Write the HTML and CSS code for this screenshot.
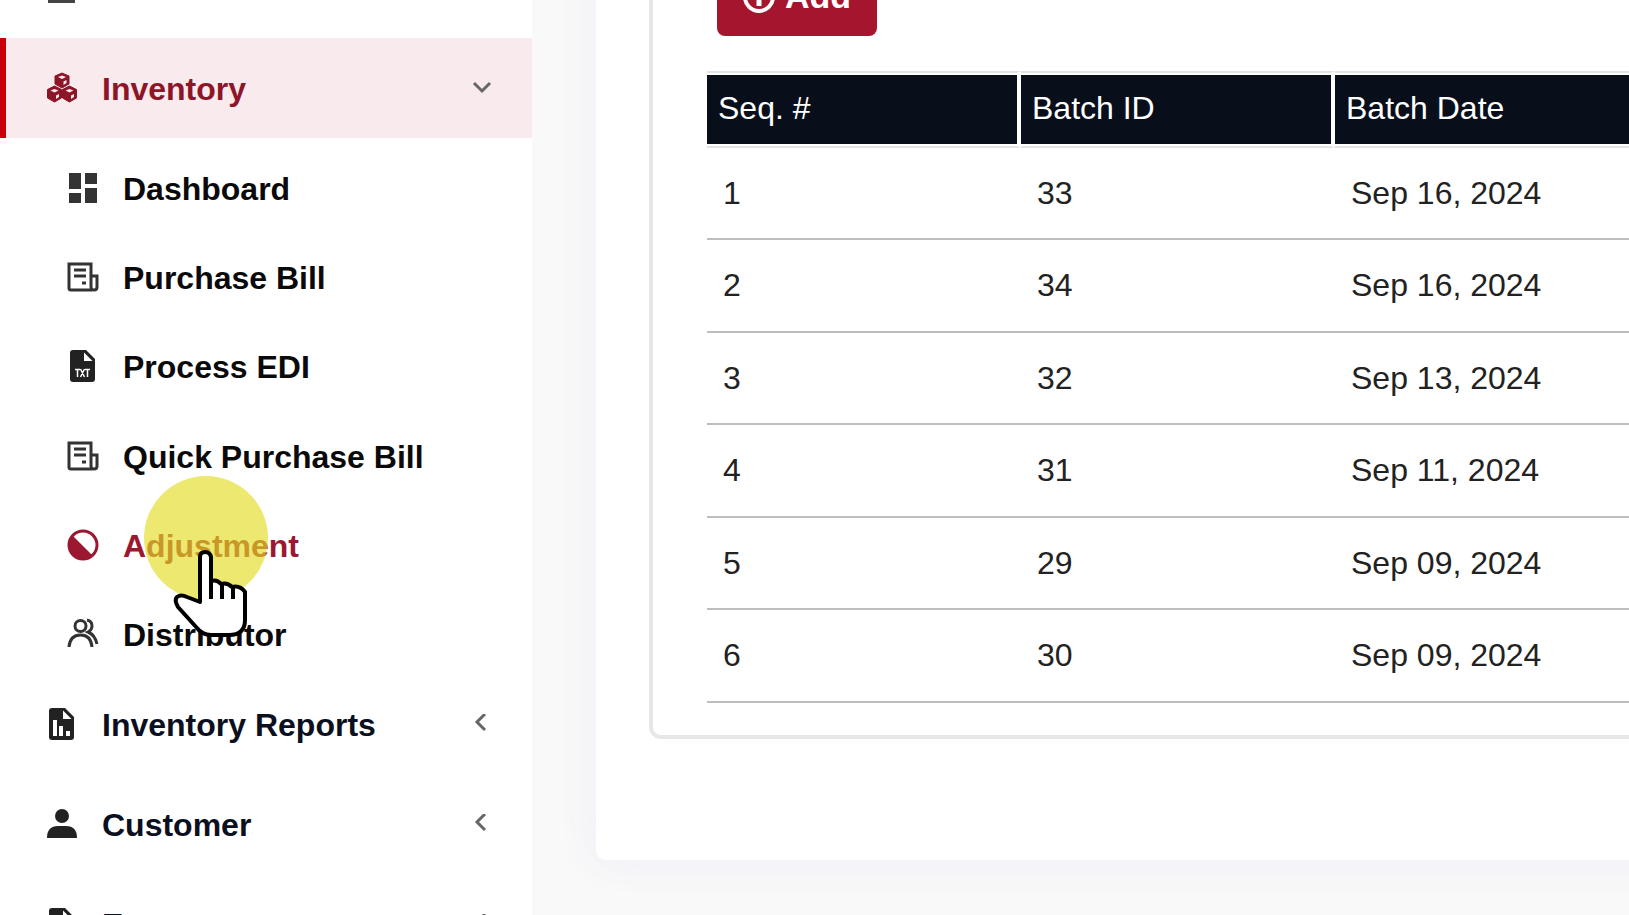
FILE: index.html
```html
<!DOCTYPE html>
<html lang="en">
  <head>
    <meta charset="utf-8">
    <title>Inventory - Adjustment</title>
    <link rel="stylesheet" href="styles.css">
  </head>
  <body>
    <div class="layout">
      <nav class="sidebar">
        <ul class="menu">
          <li>
            <a href="#" class="menu-link" aria-label="Sales">
              <svg class="icon" viewBox="0 0 32 32"><path fill="#444" d="M2 2h27v29H2z"/></svg>
            </a>
          </li>
          <li>
            <a href="#" class="menu-link active">
              <svg class="icon" viewBox="0 0 32 32">
                <g fill="currentColor" stroke="currentColor" stroke-linejoin="round">
                  <path d="M16 1l7 3v8l-7 4-7-4V4z"/>
                  <path d="M8.500 14l7 3.500v8.500l-7 4-7-4v-8.500z"/>
                  <path d="M23.500 14l7 3.500v8.500l-7 4-7-4v-8.500z"/>
                </g>
                <g fill="#f8eaed">
                  <path d="M12 5l4-1.500L20 5l-4 2zM17.500 9.500l3-1.500v3l-3 2z"/>
                  <path d="M4.500 18.500l4-1.500 4 1.500-4 2zM10 23.500l3-1.500v3l-3 2z"/>
                  <path d="M19.500 18.500l4-1.500 4 1.500-4 2zM25 23.500l3-1.500v3l-3 2z"/>
                </g>
              </svg>
              <span>Inventory</span>
              <svg class="arrow" viewBox="0 0 20 20"><path d="M2 5l8 8 8-8"/></svg>
            </a>
            <ul class="submenu">
              <li>
                <a href="#" class="submenu-link">
                  <svg class="icon" viewBox="0 0 32 32"><path fill="#333" d="M2 1h12v16H2zM18 1h12v11H18zM2 21h12v10H2zM18 16h12v15H18z"/></svg>
                  <span>Dashboard</span>
                </a>
              </li>
              <li>
                <a href="#" class="submenu-link">
                  <svg class="icon" viewBox="0 0 32 32">
                    <path class="line" d="M25 29H4q-2 0-2-2V3h22v23q0 3 3 3t3-3V15h-6"/>
                    <path class="line" d="M7 9h12M7 15h12M15 22h4"/>
                  </svg>
                  <span>Purchase Bill</span>
                </a>
              </li>
              <li>
                <a href="#" class="submenu-link">
                  <svg class="icon" viewBox="0 0 32 32">
                    <path fill="#222" d="M6 0h13l9 9v20q0 3-3 3H6q-3 0-3-3V3q0-3 3-3z"/>
                    <path fill="#fff" d="M17 2.500V11h8.500z"/>
                    <path fill="none" stroke="#fff" stroke-width="1.500" d="M8 19.500h5M10.500 19v8M13.500 19l4 8M17.500 19l-4 8M18 19.500h5M20.500 19v8"/>
                  </svg>
                  <span>Process EDI</span>
                </a>
              </li>
              <li>
                <a href="#" class="submenu-link">
                  <svg class="icon" viewBox="0 0 32 32">
                    <path class="line" d="M25 29H4q-2 0-2-2V3h22v23q0 3 3 3t3-3V15h-6"/>
                    <path class="line" d="M7 9h12M7 15h12M15 22h4"/>
                  </svg>
                  <span>Quick Purchase Bill</span>
                </a>
              </li>
              <li>
                <a href="#" class="submenu-link current">
                  <svg class="icon" viewBox="0 0 32 32">
                    <circle cx="16" cy="16" r="14" fill="none" stroke="currentColor" stroke-width="3"/>
                    <path fill="currentColor" d="M5 6a15 15 0 0 0 21 21z"/>
                  </svg>
                  <span>Adjustment</span>
                </a>
                <svg class="pointer" viewBox="0 0 124 170">
                  <circle cx="62" cy="62" r="62" fill="#e2dc23" fill-opacity=".65"/>
                  <path fill="#fff" stroke="#000" stroke-width="4" stroke-linejoin="round" d="M56 126V81q0-5 5-5t6 5v24q6-2 10 3 6-2 11 3 8-2 13 5v28q0 15-16 15H67q-9 0-14-7L34 131q-4-7-1-10 4-3 10 0z"/>
                  <path fill="none" stroke="#000" stroke-width="4" d="M67 103v20M78 108v15M89 111v12"/>
                </svg>
              </li>
              <li>
                <a href="#" class="submenu-link">
                  <svg class="icon" viewBox="0 0 32 32">
                    <circle class="line" cx="13.500" cy="8" r="5.500"/>
                    <path class="line" d="M2 29q1-12 11.500-12T25 29M20 2q5 1 5 6 0 4-4 6 7 3 9 12"/>
                  </svg>
                  <span>Distributor</span>
                </a>
              </li>
            </ul>
          </li>
          <li>
            <a href="#" class="menu-link">
              <svg class="icon" viewBox="0 0 32 32">
                <path fill="#222" d="M6 0h13l9 9v20q0 3-3 3H6q-3 0-3-3V3q0-3 3-3z"/>
                <path fill="#fff" d="M17 2.500V11h8.500zM7 12h4v16H7zM13 18h4v10h-4zM20 23h4v5h-4z"/>
              </svg>
              <span>Inventory Reports</span>
              <svg class="arrow" viewBox="0 0 20 20"><path d="M13 0L5 8l8 8"/></svg>
            </a>
          </li>
          <li>
            <a href="#" class="menu-link">
              <svg class="icon" viewBox="0 0 32 32"><circle cx="16" cy="8" r="7" fill="#222"/><path fill="#222" d="M1 30q0-12 11-12h8q11 0 11 12z"/></svg>
              <span>Customer</span>
              <svg class="arrow" viewBox="0 0 20 20"><path d="M13 0L5 8l8 8"/></svg>
            </a>
          </li>
          <li>
            <a href="#" class="menu-link">
              <svg class="icon" viewBox="0 0 32 32">
                <path fill="#222" d="M6 0h13l9 9v20q0 3-3 3H6q-3 0-3-3V3q0-3 3-3z"/>
                <path fill="#fff" d="M17 2.500V11h8.500z"/>
              </svg>
              <span>Expense</span>
              <svg class="arrow" viewBox="0 0 20 20"><path d="M13 0L5 8l8 8"/></svg>
            </a>
          </li>
        </ul>
      </nav>
      <main class="content">
        <div class="card">
          <div class="panel">
            <button type="button" class="btn-add">
              <svg class="icon" viewBox="0 0 32 32"><circle cx="16" cy="16" r="14" fill="none" stroke="#fff" stroke-width="4"/><path stroke="#fff" stroke-width="5" d="M16 8v17M8 16h16"/></svg>
              Add
            </button>
            <table class="batches">
              <thead>
                <tr><th>Seq. #</th><th>Batch ID</th><th>Batch Date</th></tr>
              </thead>
              <tbody>
                <tr><td>1</td><td>33</td><td>Sep 16, 2024</td></tr>
                <tr><td>2</td><td>34</td><td>Sep 16, 2024</td></tr>
                <tr><td>3</td><td>32</td><td>Sep 13, 2024</td></tr>
                <tr><td>4</td><td>31</td><td>Sep 11, 2024</td></tr>
                <tr><td>5</td><td>29</td><td>Sep 09, 2024</td></tr>
                <tr><td>6</td><td>30</td><td>Sep 09, 2024</td></tr>
              </tbody>
            </table>
          </div>
        </div>
      </main>
    </div>
  </body>
</html>
```

FILE: styles.css
```css
* {
  box-sizing: border-box;
}

body {
  margin: 0;
  font-family: "Liberation Sans", Arial, sans-serif;
  font-size: 32px;
  color: #222;
  background-color: #f9f9f9;
  overflow: hidden;
}

.layout {
  display: flex;
  height: 100vh;
  overflow: hidden;
}

/* sidebar */
.sidebar {
  flex: 0 0 532px;
  background-color: #fff;
}

.menu,
.submenu {
  list-style: none;
  margin: 0;
  padding: 0;
}

/* scrolled down a little */
.menu {
  margin-top: -62px;
}

.menu-link,
.submenu-link {
  display: flex;
  align-items: center;
  gap: 24px;
  color: #0b1020;
  font-weight: bold;
  text-decoration: none;
}

.menu-link span,
.submenu-link span {
  padding-top: 3px;
}

.menu-link {
  height: 100px;
  padding: 0 40px;
  border-left: 6px solid transparent;
}

.menu-link.active {
  color: #8d1528;
  background-color: #f8eaed;
  border-left-color: #c8000c;
}

.submenu {
  display: grid;
  grid-auto-rows: 1fr;
  min-height: 536px;
}

.submenu li {
  position: relative;
}

.submenu-link {
  height: 100%;
  padding: 10px 40px 0 67px;
  color: #0a0a0a;
}

.submenu-link.current {
  color: #9c1730;
}

.icon {
  flex: none;
  width: 32px;
  height: 32px;
}

.line {
  fill: none;
  stroke: #333;
  stroke-width: 3;
}

.arrow {
  width: 20px;
  height: 20px;
  margin-left: auto;
  fill: none;
  stroke: #666;
  stroke-width: 3;
}

.pointer {
  position: absolute;
  top: -19px;
  left: 144px;
  z-index: 1;
  width: 124px;
  height: 170px;
}

/* main area */
.content {
  flex: 1;
  min-width: 0;
  padding-left: 64px;
}

.card {
  min-width: 1200px;
  padding: 0 53px 121px;
  background-color: #fff;
  border-radius: 0 0 10px 10px;
  box-shadow: 0 0 40px #ececf8;
}

.panel {
  padding: 0 54px 32px;
  border: 4px solid #e7e7e7;
  border-top: none;
  border-radius: 0 0 12px 12px;
}

.btn-add {
  display: flex;
  align-items: center;
  gap: 10px;
  height: 79px;
  margin: -43px 0 35px 10px;
  padding: 0 26px;
  font-family: inherit;
  font-size: 34px;
  font-weight: bold;
  color: #fff;
  background-color: #a5152e;
  border: none;
  border-radius: 8px;
}

.batches {
  width: 100%;
  table-layout: fixed;
  border-spacing: 0;
}

.batches th {
  height: 77px;
  padding: 0 11px 2px;
  font-weight: normal;
  text-align: left;
  color: #fff;
  background-color: #080f1b;
  border-top: 2px solid #e2e3e7;
  border-bottom: 2px solid #e2e3e7;
  border-right: 4px solid #fff;
  box-shadow: inset 0 2px #fff, inset 0 -2px #fff;
}

.batches th:nth-child(-n+2) {
  width: 314px;
}

.batches td {
  height: 92px;
  padding: 0 16px;
  border-bottom: 2px solid #bdbdbd;
}

.batches tr:nth-child(even) td {
  height: 93px;
}
```
